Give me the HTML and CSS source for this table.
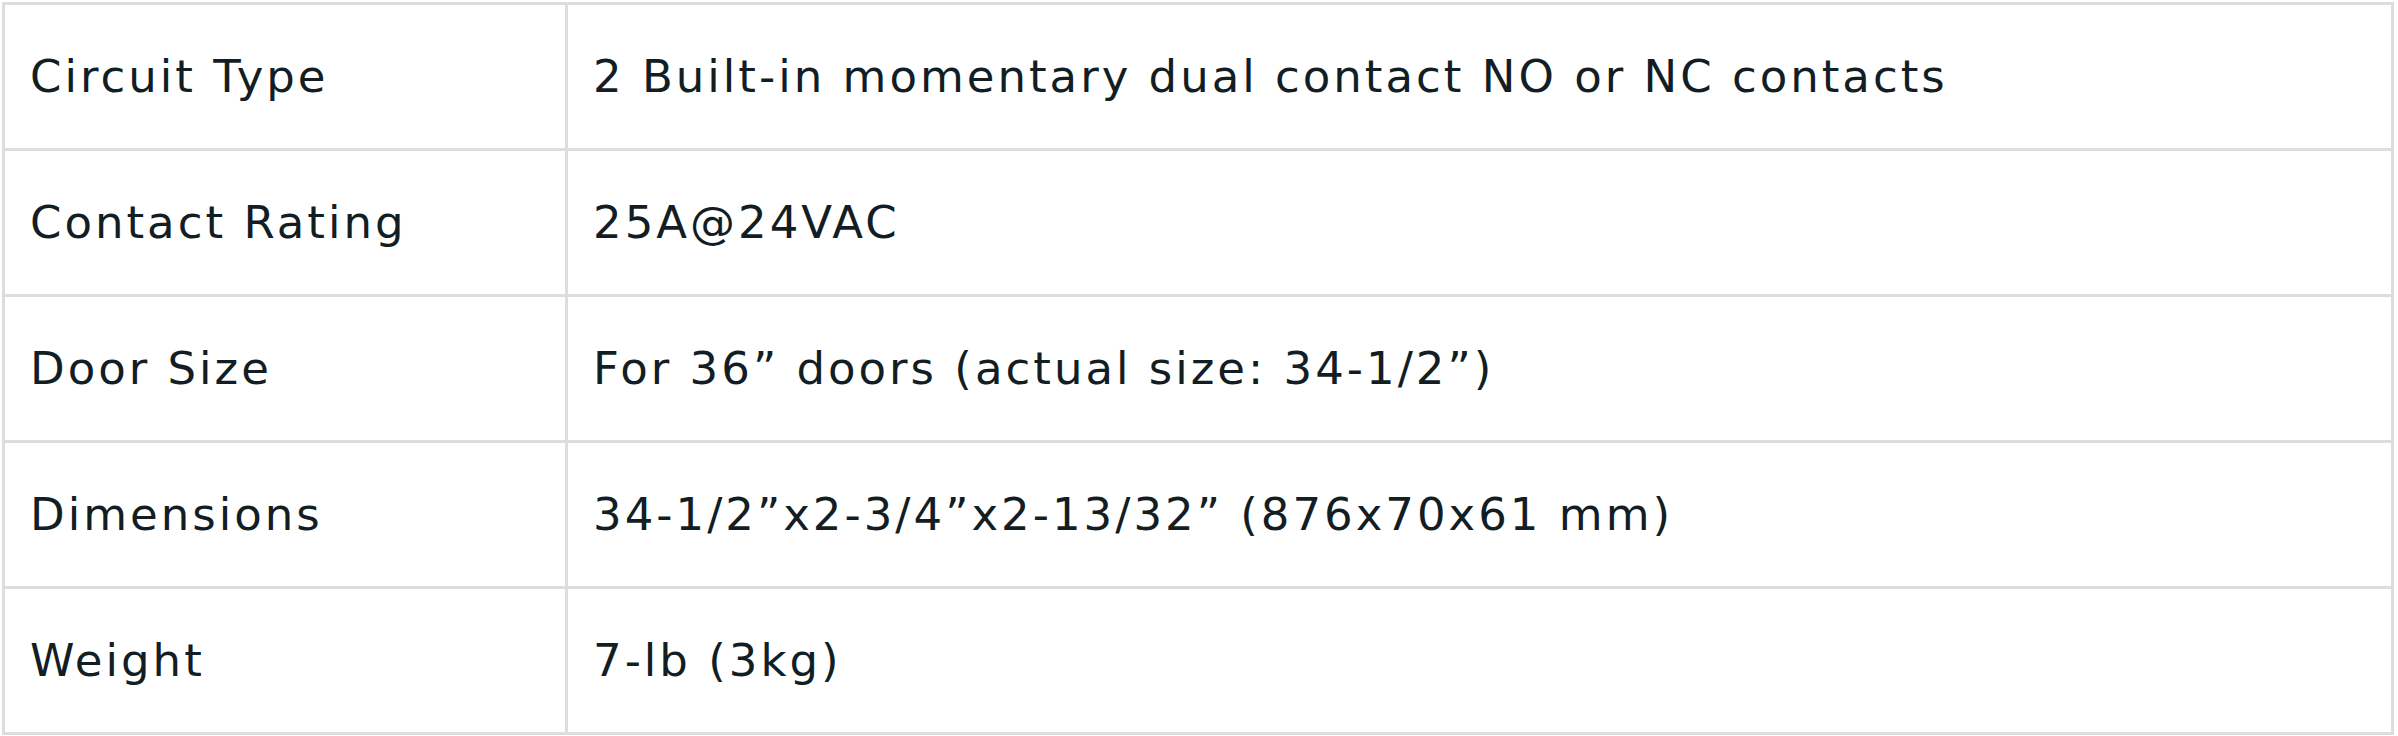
FILE: index.html
```html
<!DOCTYPE html>
<html>
<head>
<meta charset="utf-8">
<link rel="stylesheet" href="styles.css">
</head>
<body>
<table class="specs">
  <tr><td class="label">Circuit Type</td><td class="value">2 Built-in momentary dual contact NO or NC contacts</td></tr>
  <tr><td class="label">Contact Rating</td><td class="value">25A@24VAC</td></tr>
  <tr><td class="label">Door Size</td><td class="value">For 36” doors (actual size: 34-1/2”)</td></tr>
  <tr><td class="label">Dimensions</td><td class="value">34-1/2”x2-3/4”x2-13/32” (876x70x61 mm)</td></tr>
  <tr><td class="label">Weight</td><td class="value">7-lb (3kg)</td></tr>
</table>
</body>
</html>
```
FILE: styles.css
```css
html, body {
  background: #ffffff;
}
body {
  margin: 2px 4px 2px 2px;
  font-family: "DejaVu Sans", "Liberation Sans", sans-serif;
  color: #121d24;
}
.specs {
  width: 100%;
  border-collapse: collapse;
  border: 3px solid #dddddd;
}
.specs td {
  border: 3px solid #dddddd;
  height: 146px;
  padding: 0 0 0 25px;
  font-size: 45px;
  font-weight: 400;
  letter-spacing: 3px;
  vertical-align: middle;
  box-sizing: border-box;
}
.specs .label {
  width: 563px;
}
```
